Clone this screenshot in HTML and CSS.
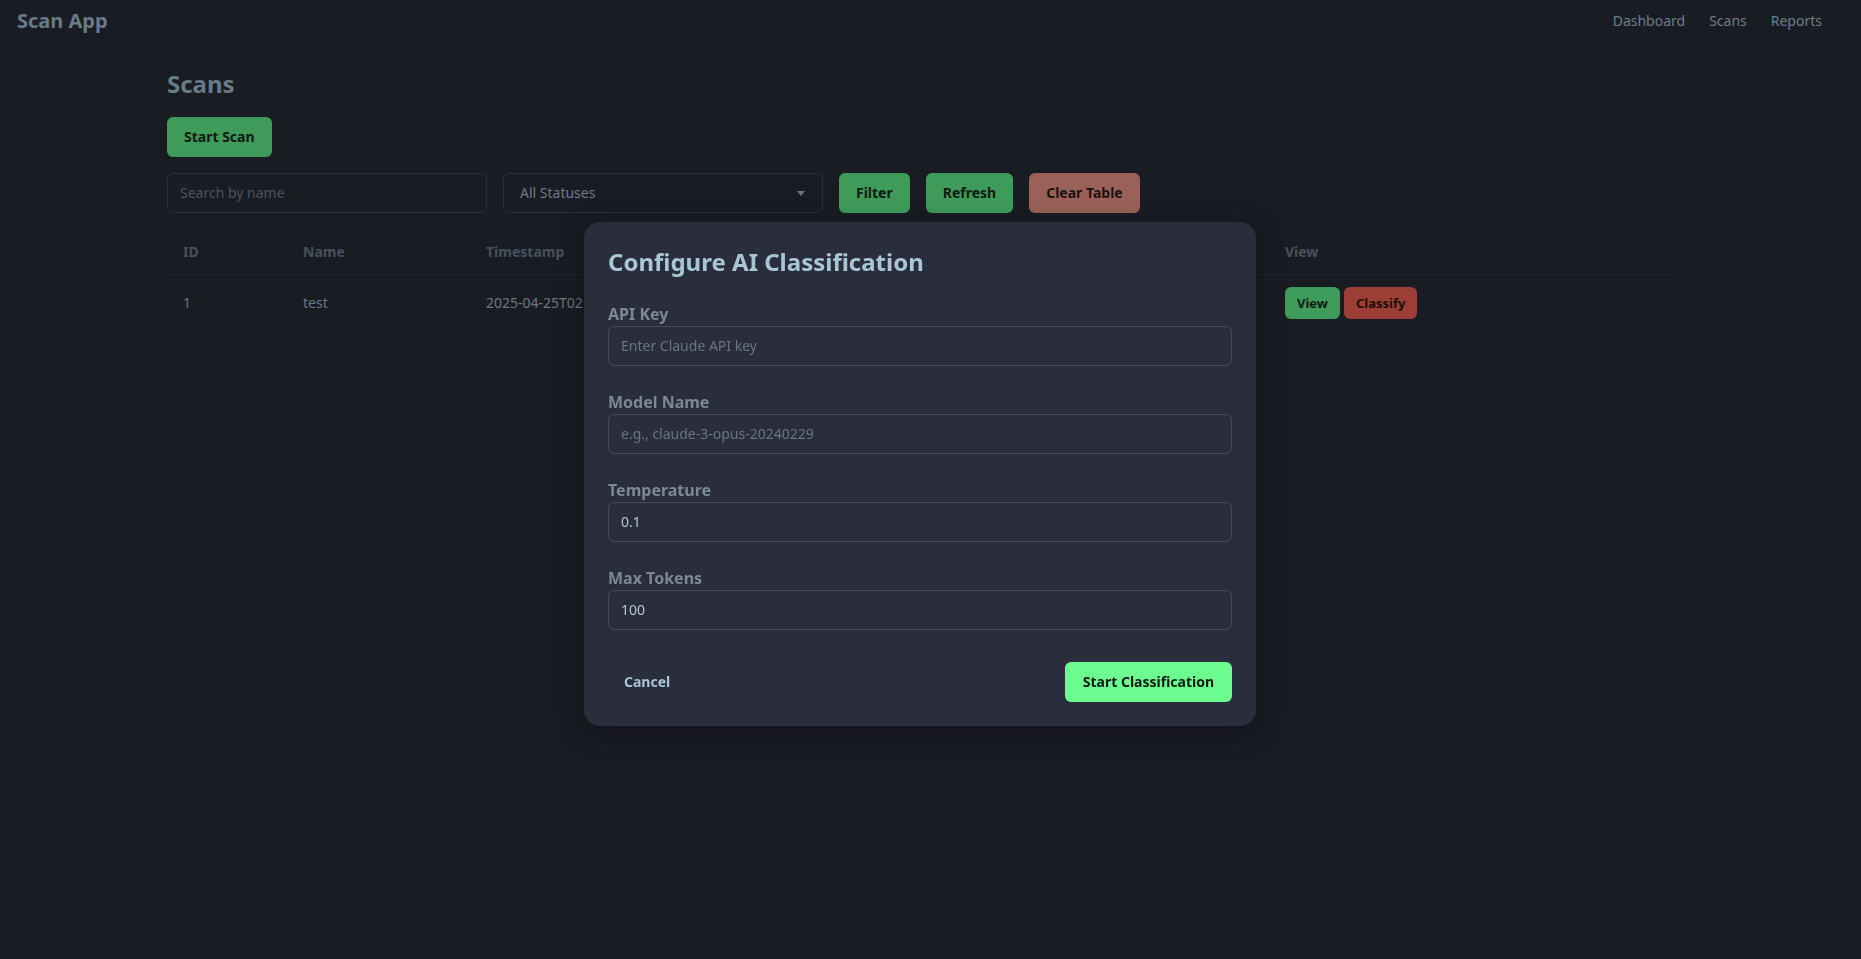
FILE: index.html
```html
<!DOCTYPE html>
<html lang="en">
<head>
<meta charset="utf-8">
<title>Scan App</title>
<link rel="stylesheet" href="styles.css">
</head>
<body>
<header class="navbar">
  <div class="brand">Scan App</div>
  <nav class="nav-links">
    <a href="#">Dashboard</a>
    <a href="#">Scans</a>
    <a href="#">Reports</a>
  </nav>
</header>

<main class="container">
  <h2 class="page-title">Scans</h2>
  <button class="btn btn-green">Start Scan</button>

  <div class="filters">
    <input class="field search" type="text" placeholder="Search by name">
    <div class="select-wrap">
      <select class="field select">
        <option>All Statuses</option>
      </select>
    </div>
    <button class="btn btn-green">Filter</button>
    <button class="btn btn-green">Refresh</button>
    <button class="btn btn-muted-red">Clear Table</button>
  </div>

  <table class="scan-table">
    <thead>
      <tr>
        <th class="col-id">ID</th>
        <th class="col-name">Name</th>
        <th class="col-time">Timestamp</th>
        <th class="col-status">Status</th>
        <th class="col-view">View</th>
      </tr>
    </thead>
    <tbody>
      <tr>
        <td>1</td>
        <td>test</td>
        <td>2025-04-25T02:14:33</td>
        <td>completed</td>
        <td>
          <div class="row-actions">
            <button class="btn-sm btn-green">View</button>
            <button class="btn-sm btn-red">Classify</button>
          </div>
        </td>
      </tr>
    </tbody>
  </table>
</main>

<div class="modal">
  <h3 class="modal-title">Configure AI Classification</h3>
  <div class="form-group">
    <label>API Key</label>
    <input class="modal-input" type="text" placeholder="Enter Claude API key">
  </div>
  <div class="form-group">
    <label>Model Name</label>
    <input class="modal-input" type="text" placeholder="e.g., claude-3-opus-20240229">
  </div>
  <div class="form-group">
    <label>Temperature</label>
    <input class="modal-input" type="text" value="0.1">
  </div>
  <div class="form-group">
    <label>Max Tokens</label>
    <input class="modal-input" type="text" value="100">
  </div>
  <div class="modal-actions">
    <button class="btn btn-cancel">Cancel</button>
    <button class="btn btn-bright">Start Classification</button>
  </div>
</div>
</body>
</html>
```

FILE: styles.css
```css
* { box-sizing: border-box; }

html, body {
  margin: 0;
  padding: 0;
  background: #1a1c24;
  font-family: "Noto Sans", "Open Sans", sans-serif;
  color: #6b7b88;
}

body { min-height: 959px; }

.navbar {
  display: flex;
  justify-content: space-between;
  align-items: center;
  height: 40px;
  padding: 0 39px 0 17px;
}

.brand {
  font-size: 20px;
  font-weight: 700;
  color: #687b88;
}

.nav-links {
  display: flex;
  gap: 24px;
}

.nav-links a {
  font-size: 14px;
  color: #6a7f8d;
  text-decoration: none;
}

.container {
  width: 1505px;
  margin-left: 167px;
  padding-top: 30px;
}

.page-title {
  margin: 0 0 18px;
  font-size: 24px;
  line-height: 28.8px;
  font-weight: 700;
  color: #687b88;
}

.btn {
  height: 40px;
  padding: 0 17px;
  border: none;
  border-radius: 6px;
  font-family: inherit;
  font-size: 14px;
  font-weight: 700;
  color: #111;
  cursor: pointer;
}

.btn-green { background: #3f9b59; color: #0f1a12; }
.btn-muted-red { background: #9a6158; color: #1b1212; }
.btn-red { background: #9c3e35; color: #1e0b08; }

.filters {
  display: flex;
  gap: 16px;
  margin-top: 16px;
  align-items: center;
}

.field {
  height: 40px;
  width: 320px;
  background: #1a1c24;
  border: 1px solid #2c2f38;
  border-radius: 6px;
  font-family: inherit;
  font-size: 14px;
  color: #6b7b88;
  outline: none;
}

.search { padding: 0 12px; }
.search::placeholder { color: #4a5360; }

.select-wrap {
  position: relative;
  width: 320px;
}

.select {
  appearance: none;
  -webkit-appearance: none;
  padding: 0 16px;
}

.select-wrap::after {
  content: "";
  position: absolute;
  right: 18px;
  top: 18px;
  border-left: 4px solid transparent;
  border-right: 4px solid transparent;
  border-top: 5px solid #6a7580;
}

.scan-table {
  width: 1505px;
  margin-top: 17px;
  border-collapse: collapse;
  table-layout: fixed;
}

.scan-table th {
  height: 44px;
  padding: 12px 16px;
  text-align: left;
  font-size: 14px;
  font-weight: 700;
  line-height: 20px;
  color: #46515c;
  border-bottom: 1px solid #22252e;
}

.scan-table td {
  padding: 12px 16px;
  font-size: 14px;
  line-height: 20px;
  color: #697884;
  vertical-align: middle;
}

.col-id { width: 120px; }
.col-name { width: 183px; }
.col-time { width: 400px; }
.col-status { width: 399px; }
.col-view { width: 403px; }

.row-actions {
  display: flex;
  gap: 4px;
}

.btn-sm {
  height: 32px;
  padding: 0 12px;
  border: none;
  border-radius: 6px;
  font-family: inherit;
  font-size: 13px;
  font-weight: 700;
}

.modal {
  position: fixed;
  left: 584px;
  top: 222px;
  width: 672px;
  padding: 23px 24px 24px;
  background: #2a2d3b;
  border-radius: 16px;
  box-shadow: 0 6px 28px rgba(0, 0, 0, 0.35);
}

.modal-title {
  margin: 0 0 23px;
  font-size: 24px;
  line-height: 33.6px;
  font-weight: 700;
  color: #a8c6d3;
}

.form-group { margin-bottom: 24px; }

.form-group label {
  display: block;
  font-size: 16px;
  line-height: 24px;
  font-weight: 700;
  color: #7b8995;
}

.modal-input {
  display: block;
  width: 100%;
  height: 40px;
  padding: 0 12px;
  background: #2a2d3b;
  border: 1px solid #454959;
  border-radius: 6px;
  font-family: inherit;
  font-size: 14px;
  color: #b9c6d0;
  outline: none;
}

.modal-input::placeholder { color: #6a7380; }

.modal-actions {
  display: flex;
  justify-content: space-between;
  margin-top: 32px;
}

.btn-cancel {
  padding: 0 16px;
  background: transparent;
  color: #a9c4d4;
}

.btn-bright {
  padding: 0 18px;
  background: #6dfc90;
  color: #0d1a10;
}
```
